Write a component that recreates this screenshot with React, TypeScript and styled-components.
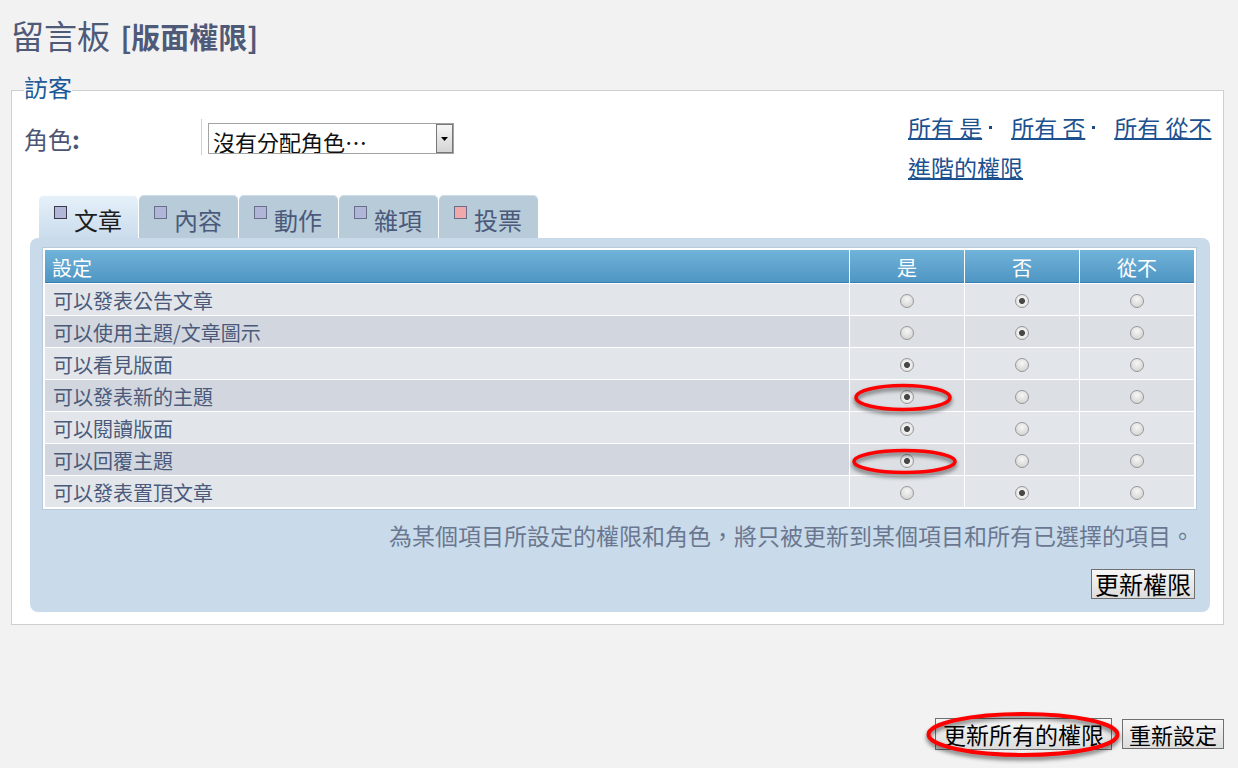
import React from "react";
import styled, { createGlobalStyle } from "styled-components";

const GlobalStyle = createGlobalStyle`
  html, body {
    margin: 0;
    padding: 0;
    background: #f2f2f2;
  }
  body {
    font-family: "Noto Sans CJK TC", "Noto Sans", sans-serif;
    color: #4b5a7a;
  }
  * {
    box-sizing: border-box;
  }
`;

const Page = styled.div`
  width: 1238px;
  min-height: 768px;
  padding: 15px 14px 0 11px;
`;

const Title = styled.h1`
  margin: 0;
  height: 40px;
  font-size: 33px;
  font-weight: normal;
  line-height: 40px;
  color: #4f5a79;
  white-space: nowrap;
`;

const TitleSub = styled.span`
  margin-left: 3px;
  font-size: 29px;
  font-weight: bold;
  line-height: 1;
`;

const Fieldset = styled.fieldset`
  margin: 18px 0 0;
  padding: 0 13px 12px 12px;
  min-width: 0;
  border: 1px solid #cfcfcf;
  background: #fff;
`;

const Legend = styled.legend`
  padding: 0 0 6px;
  font-size: 24px;
  line-height: 28px;
  color: #1d5a99;
`;

const RoleRow = styled.div`
  display: flex;
  align-items: flex-start;
  height: 80px;
  margin-top: -2px;
`;

const RoleLabel = styled.div`
  flex: none;
  width: 178px;
  height: 36px;
  margin-top: 14px;
  padding-top: 3px;
  line-height: 33px;
  font-size: 24px;
  color: #4b5573;
  border-right: 1px solid #d0d0d0;
`;

const SelectBox = styled.div`
  flex: none;
  display: flex;
  width: 246px;
  height: 31px;
  margin: 18px 0 0 6px;
  border: 1px solid #a3a3a3;
  background: #fff;
`;

const Select = styled.select`
  flex: 1;
  min-width: 0;
  height: 100%;
  padding: 1px 0 0 4px;
  appearance: none;
  border: 0;
  outline: none;
  background: transparent;
  font-family: inherit;
  font-size: 22px;
  color: #111;
`;

const SelectArrow = styled.span`
  flex: none;
  width: 17px;
  display: flex;
  align-items: center;
  justify-content: center;
  border: 1px solid #777;
  background: linear-gradient(#f6f6f6, #d4d4d4);
  pointer-events: none;
`;

const QuickLinks = styled.div`
  flex: none;
  width: 302px;
  margin: 2px 0 0 auto;
  font-size: 23px;
  line-height: 40px;
`;

const LinkLine = styled.div`
  white-space: nowrap;
`;

const QuickLink = styled.a`
  color: #1c5190;
  text-decoration: underline;
  text-underline-offset: 1px;
  cursor: pointer;
`;

const Dot = styled.span`
  display: inline-block;
  width: 3px;
  height: 3px;
  margin: 0 19px 0 7px;
  vertical-align: 0.33em;
  background: #1c4a80;
`;

const TabBar = styled.div`
  display: flex;
  gap: 1px;
  margin: 10px 0 0 15px;
`;

const Tab = styled.div<{ $active?: boolean }>`
  width: 99px;
  height: 43px;
  padding: 10px 0 3px 15px;
  display: flex;
  gap: 7px;
  border-radius: 5px 5px 0 0;
  background: ${(p) =>
    p.$active ? "linear-gradient(#e6f1fa, #cadcec)" : "#b8cbd9"};
  box-shadow: inset 0 1px 0
    ${(p) => (p.$active ? "rgba(255,255,255,0.8)" : "rgba(255,255,255,0.35)")};
  color: ${(p) => (p.$active ? "#1e1e1e" : "#4b5a7a")};
  font-size: 24px;
  line-height: 30px;
  cursor: pointer;
`;

const TabSwatch = styled.span<{ $color: string; $dark?: boolean }>`
  flex: none;
  width: 13px;
  height: 13px;
  margin-top: 1px;
  background: ${(p) => p.$color};
  border: 1px solid ${(p) => (p.$dark ? "#3a3a4a" : "#6a6e88")};
`;

const Panel = styled.div`
  margin-left: 6px;
  padding: 10px 14px 13px 13px;
  border-radius: 8px;
  background: #c9dbea;
`;

const Grid = styled.table`
  width: 100%;
  table-layout: fixed;
  border-collapse: separate;
  border-spacing: 1px;
  border: 1px solid #fff;
  background: #fff;
  box-shadow: 0 0 0 1px rgba(150, 170, 190, 0.35);
`;

const ChoiceCol = styled.col`
  width: 114px;
`;

const HeadCell = styled.th<{ $center?: boolean }>`
  padding: 4px 7px 0;
  line-height: 28px;
  font-size: 20px;
  font-weight: normal;
  color: #fff;
  text-align: ${(p) => (p.$center ? "center" : "left")};
  background: linear-gradient(#71b3d9, #4f96c4);
  border-bottom: 1px solid #3a7db1;
`;

const LabelCell = styled.td<{ $alt: boolean }>`
  padding: 3px 8px 0;
  line-height: 28px;
  font-size: 20px;
  color: #4b5a7a;
  white-space: nowrap;
  background: ${(p) => (p.$alt ? "#d2d7df" : "#e2e6ea")};
`;

const ChoiceCell = styled.td<{ $alt: boolean }>`
  position: relative;
  padding: 0;
  background: ${(p) => (p.$alt ? "#dcdfe3" : "#e2e6ea")};
`;

const ChoiceInner = styled.div`
  height: 31px;
  padding-top: 3px;
  display: flex;
  align-items: center;
  justify-content: center;
`;

const Radio = styled.input.attrs({ type: "radio" })`
  appearance: none;
  margin: 0;
  width: 14px;
  height: 14px;
  border-radius: 50%;
  border: 1px solid #979797;
  background: radial-gradient(circle at 50% 35%, #f7f7f7, #d9d9d9 70%, #c9c9c9);
  cursor: pointer;

  &:checked {
    background: radial-gradient(
      circle,
      #484848 0 2.6px,
      #f1f1f1 3.4px,
      #dadada 100%
    );
  }
`;

const Note = styled.p`
  margin: 11px 0 0;
  padding-right: 2px;
  text-align: right;
  font-size: 23px;
  line-height: 30px;
  color: #6b7790;
`;

const PanelFoot = styled.div`
  display: flex;
  justify-content: flex-end;
  margin-top: 19px;
  padding-right: 1px;
`;

const Button = styled.button<{ $size: number; $pad: number; $h: number }>`
  height: ${(p) => p.$h}px;
  padding: 0 ${(p) => p.$pad}px;
  font-family: inherit;
  font-size: ${(p) => p.$size}px;
  line-height: ${(p) => p.$h - 2}px;
  color: #000;
  border: 1px solid #707070;
  border-radius: 0;
  background: linear-gradient(#f7f7f7, #dcdcdc);
  white-space: nowrap;
  cursor: pointer;
`;

const Actions = styled.div`
  display: flex;
  justify-content: flex-end;
  align-items: center;
  gap: 10px;
  margin-top: 93px;
`;

const Marked = styled.span`
  position: relative;
  display: inline-flex;
`;

/* Red hand-drawn style ring laid over a control */
const RingSvg = styled.svg<{ $dx: number; $dy: number }>`
  position: absolute;
  left: 50%;
  top: 50%;
  overflow: visible;
  pointer-events: none;
  z-index: 2;
  transform: translate(-50%, -50%)
    translate(${(p) => p.$dx}px, ${(p) => p.$dy}px);
  filter: drop-shadow(0 3px 2px rgba(0, 0, 0, 0.55));
`;

function Ring({
  rx,
  ry,
  dx = 0,
  dy = 0,
  stroke = 3.5,
}: {
  rx: number;
  ry: number;
  dx?: number;
  dy?: number;
  stroke?: number;
}) {
  const w = rx * 2 + 8;
  const h = ry * 2 + 8;
  return (
    <RingSvg
      width={w}
      height={h}
      viewBox={`0 0 ${w} ${h}`}
      $dx={dx}
      $dy={dy}
      aria-hidden
    >
      <ellipse
        cx={w / 2}
        cy={h / 2}
        rx={rx}
        ry={ry}
        fill="none"
        stroke="#ff0000"
        strokeWidth={stroke}
      />
    </RingSvg>
  );
}

type Perm = {
  label: string;
  value: 0 | 1 | 2;
  ring?: { rx: number; ry: number; dx: number; dy: number };
};

const permissions: Perm[] = [
  { label: "可以發表公告文章", value: 1 },
  { label: "可以使用主題/文章圖示", value: 1 },
  { label: "可以看見版面", value: 0 },
  { label: "可以發表新的主題", value: 0, ring: { rx: 47, ry: 12, dx: -4, dy: 1.5 } },
  { label: "可以閱讀版面", value: 0 },
  { label: "可以回覆主題", value: 0, ring: { rx: 50.5, ry: 11, dx: -2.5, dy: 1.5 } },
  { label: "可以發表置頂文章", value: 1 },
];

const tabs = [
  { name: "文章", color: "#b2b6d7", active: true },
  { name: "內容", color: "#b0b6d8" },
  { name: "動作", color: "#b0b6d8" },
  { name: "雜項", color: "#b0b6d8" },
  { name: "投票", color: "#f0a9aa" },
];

const choices = ["是", "否", "從不"];

export default function App() {
  return (
    <>
      <GlobalStyle />
      <Page>
        <Title>
          留言板 <TitleSub>[版面權限]</TitleSub>
        </Title>

        <Fieldset>
          <Legend>訪客</Legend>

          <RoleRow>
            <RoleLabel>
              角色<b>:</b>
            </RoleLabel>
            <SelectBox>
              <Select defaultValue="none">
                <option value="none">沒有分配角色…</option>
              </Select>
              <SelectArrow>
                <svg width="7" height="4" viewBox="0 0 7 4" aria-hidden>
                  <path d="M0 0h7L3.5 4z" fill="#000" />
                </svg>
              </SelectArrow>
            </SelectBox>
            <QuickLinks>
              <LinkLine>
                <QuickLink>所有 是</QuickLink>
                <Dot />
                <QuickLink>所有 否</QuickLink>
                <Dot />
                <QuickLink>所有 從不</QuickLink>
              </LinkLine>
              <LinkLine>
                <QuickLink>進階的權限</QuickLink>
              </LinkLine>
            </QuickLinks>
          </RoleRow>

          <TabBar>
            {tabs.map((t) => (
              <Tab key={t.name} $active={t.active}>
                <TabSwatch $color={t.color} $dark={t.active} />
                {t.name}
              </Tab>
            ))}
          </TabBar>

          <Panel>
            <Grid>
              <colgroup>
                <col />
                <ChoiceCol />
                <ChoiceCol />
                <ChoiceCol />
              </colgroup>
              <thead>
                <tr>
                  <HeadCell>設定</HeadCell>
                  {choices.map((c) => (
                    <HeadCell key={c} $center>
                      {c}
                    </HeadCell>
                  ))}
                </tr>
              </thead>
              <tbody>
                {permissions.map((p, i) => {
                  const alt = i % 2 === 1;
                  return (
                    <tr key={p.label}>
                      <LabelCell $alt={alt}>{p.label}</LabelCell>
                      {choices.map((c, ci) => (
                        <ChoiceCell key={c} $alt={alt}>
                          <ChoiceInner>
                            <Radio
                              name={`perm-${i}`}
                              defaultChecked={p.value === ci}
                            />
                          </ChoiceInner>
                          {p.ring && ci === 0 && (
                            <Ring
                              rx={p.ring.rx}
                              ry={p.ring.ry}
                              dx={p.ring.dx}
                              dy={p.ring.dy}
                            />
                          )}
                        </ChoiceCell>
                      ))}
                    </tr>
                  );
                })}
              </tbody>
            </Grid>

            <Note>
              為某個項目所設定的權限和角色，將只被更新到某個項目和所有已選擇的項目。
            </Note>

            <PanelFoot>
              <Button $size={24} $pad={3} $h={30}>
                更新權限
              </Button>
            </PanelFoot>
          </Panel>
        </Fieldset>

        <Actions>
          <Marked>
            <Button $size={23} $pad={7} $h={32}>
              更新所有的權限
            </Button>
            <Ring rx={94.5} ry={20.5} dy={0.5} stroke={4} />
          </Marked>
          <Button $size={22} $pad={6} $h={30}>
            重新設定
          </Button>
        </Actions>
      </Page>
    </>
  );
}
